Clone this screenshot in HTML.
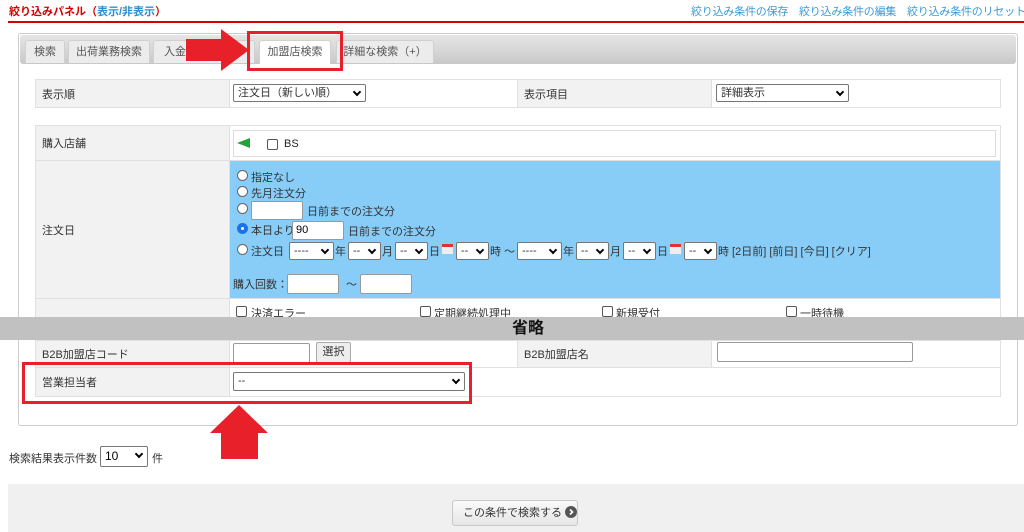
<!DOCTYPE html>
<html><head><meta charset="utf-8"><style>
*{box-sizing:border-box;margin:0;padding:0}
body{width:1024px;height:532px;overflow:hidden;background:#fff;position:relative;font-family:"Liberation Sans","Noto Sans CJK JP",sans-serif;font-size:11px;color:#333}
.a{position:absolute;white-space:nowrap}
.lab{position:absolute;background:#f2f2f2;border:1px solid #e0e0e0;padding-left:6px;display:flex;align-items:center}
.val{position:absolute;background:#fff;border:1px solid #e0e0e0}
.sel{position:absolute;background:#fff;border:1px solid #767676;border-radius:2px;font-size:11px;padding-left:4px;line-height:16px}
.sel:after{content:"";position:absolute;right:5px;top:4px;width:4px;height:4px;border-right:2px solid #000;border-bottom:2px solid #000;transform:rotate(45deg)}
.inp{position:absolute;background:#fff;border:1px solid #999;border-radius:2px}
.rad{position:absolute;width:11px;height:11px;border:1px solid #666;border-radius:50%;background:#fff}
.chk{position:absolute;width:11px;height:11px;border:1px solid #555;border-radius:2px;background:#fff}
.tab{position:absolute;top:40px;height:23px;background:#ececec;border:1px solid #d0d0d0;border-bottom:none;border-radius:3px 3px 0 0;color:#555;text-align:center;line-height:22px}
</style></head><body>
<div class="a" style="left:9px;top:3px;color:#d40000;font-weight:bold;font-size:11px">絞り込みパネル（<span style="color:#2a8fd0">表示/非表示</span>）</div>
<div class="a" style="left:691px;top:3px;color:#3a9ad9;font-size:11px;letter-spacing:-0.2px">絞り込み条件の保存　絞り込み条件の編集　絞り込み条件のリセット</div>
<div class="a" style="left:8px;top:21px;width:1016px;height:2px;background:#d40000"></div>

<div class="a" style="left:18px;top:33px;width:1000px;height:393px;border:1px solid #ccc;border-radius:3px"></div>
<div class="a" style="left:20px;top:35px;width:996px;height:29px;background:linear-gradient(#e6e6e6,#c8c8c8);border-radius:3px"></div>
<div class="tab" style="left:25px;width:40px">検索</div>
<div class="tab" style="left:68px;width:82px">出荷業務検索</div>
<div class="tab" style="left:153px;width:102px;text-align:left;padding-left:10px">入金業務検索</div>
<div class="tab" style="left:259px;width:72px;background:#fff;height:24px">加盟店検索</div>
<div class="tab" style="left:336px;width:98px">詳細な検索（+）</div>
<svg class="a" style="left:183px;top:28px" width="70" height="44"><polygon points="3,11 38,11 38,1 66,22 38,43 38,33 3,33" fill="#e8202a"/></svg>
<div class="a" style="left:247px;top:31px;width:96px;height:40px;border:3px solid #e8202a"></div>

<div class="lab" style="left:35px;top:79px;width:195px;height:29px">表示順</div>
<div class="val" style="left:229px;top:79px;width:289px;height:29px"></div>
<div class="sel" style="left:233px;top:84px;width:133px;height:18px">注文日（新しい順）</div>
<div class="lab" style="left:517px;top:79px;width:195px;height:29px">表示項目</div>
<div class="val" style="left:711px;top:79px;width:290px;height:29px"></div>
<div class="sel" style="left:716px;top:84px;width:133px;height:18px">詳細表示</div>

<div class="lab" style="left:35px;top:125px;width:195px;height:36px">購入店舗</div>
<div class="val" style="left:229px;top:125px;width:772px;height:36px"></div>
<div class="a" style="left:233px;top:130px;width:763px;height:27px;border:1px solid #ddd"></div>
<svg class="a" style="left:237px;top:138px" width="14" height="10"><polygon points="0,5 13,0 13,10" fill="#22a33a"/></svg>
<div class="chk" style="left:267px;top:139px"></div>
<div class="a" style="left:284px;top:138px;font-size:11px;color:#222">BS</div>

<div class="lab" style="left:35px;top:160px;width:195px;height:139px">注文日</div>
<div class="a" style="left:229px;top:160px;width:772px;height:139px;background:#87cdf8;border:1px solid #e0e0e0"></div>
<div class="rad" style="left:237px;top:170px"></div><div class="a" style="left:251px;top:169px">指定なし</div>
<div class="rad" style="left:237px;top:186px"></div><div class="a" style="left:251px;top:185px">先月注文分</div>
<div class="rad" style="left:237px;top:203px"></div><div class="inp" style="left:251px;top:201px;width:52px;height:19px"></div><div class="a" style="left:307px;top:203px">日前までの注文分</div>
<div class="rad" style="left:237px;top:223px;border:4px solid #1a73e8"></div><div class="a" style="left:251px;top:222px">本日より</div><div class="inp" style="left:292px;top:221px;width:52px;height:19px;padding:2px 3px;font-size:11px;color:#000">90</div><div class="a" style="left:348px;top:223px">日前までの注文分</div>
<div class="rad" style="left:237px;top:244px"></div><div class="a" style="left:251px;top:243px">注文日</div>
<div class="sel" style="left:289px;top:242px;width:45px;height:18px">----</div><div class="a" style="left:335px;top:243px">年</div>
<div class="sel" style="left:348px;top:242px;width:33px;height:18px">--</div><div class="a" style="left:382px;top:243px">月</div>
<div class="sel" style="left:395px;top:242px;width:33px;height:18px">--</div><div class="a" style="left:429px;top:243px">日</div>
<div class="a" style="left:442px;top:244px;width:11px;height:10px;background:#eee;border-top:3px solid #d33"></div>
<div class="sel" style="left:456px;top:242px;width:33px;height:18px">--</div><div class="a" style="left:490px;top:243px">時 ～</div>
<div class="sel" style="left:517px;top:242px;width:45px;height:18px">----</div><div class="a" style="left:563px;top:243px">年</div>
<div class="sel" style="left:576px;top:242px;width:33px;height:18px">--</div><div class="a" style="left:610px;top:243px">月</div>
<div class="sel" style="left:623px;top:242px;width:33px;height:18px">--</div><div class="a" style="left:657px;top:243px">日</div>
<div class="a" style="left:670px;top:244px;width:11px;height:10px;background:#eee;border-top:3px solid #d33"></div>
<div class="sel" style="left:684px;top:242px;width:33px;height:18px">--</div><div class="a" style="left:718px;top:243px">時 [2日前] [前日] [今日] [クリア]</div>
<div class="a" style="left:233px;top:276px">購入回数：</div>
<div class="inp" style="left:287px;top:274px;width:52px;height:20px"></div><div class="a" style="left:346px;top:276px">～</div>
<div class="inp" style="left:360px;top:274px;width:52px;height:20px"></div>

<div class="lab" style="left:35px;top:298px;width:195px;height:22px"></div>
<div class="val" style="left:229px;top:298px;width:772px;height:22px"></div>
<div class="chk" style="left:236px;top:306px"></div><div class="a" style="left:251px;top:305px">決済エラー</div>
<div class="chk" style="left:420px;top:306px"></div><div class="a" style="left:434px;top:305px">定期継続処理中</div>
<div class="chk" style="left:602px;top:306px"></div><div class="a" style="left:616px;top:305px">新規受付</div>
<div class="chk" style="left:786px;top:306px"></div><div class="a" style="left:800px;top:305px">一時待機</div>
<div class="a" style="left:0;top:317px;width:1024px;height:23px;background:#c1c1c1;text-align:center;font-weight:bold;font-size:16px;line-height:23px;color:#111;padding-left:32px">省略</div>

<div class="lab" style="left:35px;top:340px;width:195px;height:28px">B2B加盟店コード</div>
<div class="val" style="left:229px;top:340px;width:289px;height:28px"></div>
<div class="inp" style="left:233px;top:343px;width:77px;height:20px"></div>
<div class="a" style="left:316px;top:342px;width:35px;height:21px;background:#eee;border:1px solid #aaa;border-radius:2px;text-align:center;line-height:19px">選択</div>
<div class="lab" style="left:517px;top:340px;width:195px;height:28px">B2B加盟店名</div>
<div class="val" style="left:711px;top:340px;width:290px;height:28px"></div>
<div class="inp" style="left:717px;top:342px;width:196px;height:20px"></div>

<div class="lab" style="left:35px;top:367px;width:195px;height:30px">営業担当者</div>
<div class="val" style="left:229px;top:367px;width:772px;height:30px"></div>
<div class="sel" style="left:233px;top:372px;width:232px;height:19px">--</div>
<div class="a" style="left:22px;top:362px;width:450px;height:42px;border:3px solid #e8202a"></div>
<svg class="a" style="left:208px;top:403px" width="62" height="58"><polygon points="31,2 60,30 50,30 50,56 13,56 13,30 2,30" fill="#e8202a"/></svg>

<div class="a" style="left:9px;top:450px;font-size:11px">検索結果表示件数</div>
<div class="sel" style="left:100px;top:446px;width:48px;height:21px;line-height:19px;font-size:12px;color:#000">10</div>
<div class="a" style="left:152px;top:450px">件</div>

<div class="a" style="left:8px;top:484px;width:1016px;height:48px;background:#f0f0f0"></div>
<div class="a" style="left:452px;top:500px;width:126px;height:26px;background:linear-gradient(#fafafa,#e6e6e6);border:1px solid #c8c8c8;border-radius:3px;font-size:11px;line-height:24px;padding-left:10px;color:#333">この条件で検索する <svg width="12" height="12" style="vertical-align:-2px"><circle cx="6" cy="6" r="6" fill="#555"/><path d="M5 3.5 L7.5 6 L5 8.5" stroke="#fff" stroke-width="1.6" fill="none"/></svg></div>
</body></html>
